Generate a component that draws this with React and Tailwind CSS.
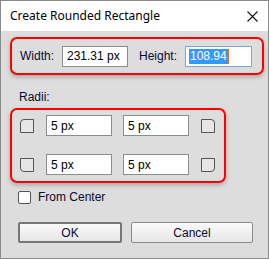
export default function App() {
  const font = { fontFamily: '"Liberation Sans", Arial, sans-serif' };

  const Corner = ({ corner }) => (
    <div
      className={`w-[14px] h-[14px] border border-[#555] bg-[#e6e6e6] ${corner}`}
    />
  );

  const Field = ({ value }) => (
    <div className="w-[66px] h-[21px] bg-white border border-[#8c8c8c] flex items-center pl-[4px] text-[12px] text-black">
      {value}
    </div>
  );

  return (
    <div
      className="w-[269px] h-[259px] border border-[#8a8a8a] bg-[#dddddd] flex flex-col select-none"
      style={font}
    >
      <div className="h-[30px] bg-white flex items-center justify-between pl-[9px] pr-[10px]">
        <span
          className="text-[12px] text-black"
          style={{ fontFamily: '"Noto Sans", "Open Sans", sans-serif' }}
        >
          Create Rounded Rectangle
        </span>
        <svg width="11" height="11" viewBox="0 0 11 11">
          <path d="M0.5 0.5 L10.5 10.5 M10.5 0.5 L0.5 10.5" stroke="#111" strokeWidth="1.1" />
        </svg>
      </div>

      <div className="flex flex-col pl-[9px]">
        <div className="mt-[6px] w-[254px] h-[38px] border-2 border-[#ff0000] rounded-[7px] flex items-center pl-[8px] shadow-[0_2px_4px_rgba(0,0,0,0.25)]">
          <span className="text-[12px] text-[#0a0a30] w-[42px]">Width:</span>
          <Field value="231.31 px" />
          <span className="text-[12px] text-[#0a0a30] ml-[11px] w-[46px]">Height:</span>
          <div className="w-[67px] h-[21px] bg-white border border-[#7aa7d6] flex items-center pl-[3px] text-[12px]">
            <span className="bg-[#3399ff] text-white px-[1px] leading-[15px]">108.94</span>
            <span className="w-[1px] h-[15px] bg-[#e07020]" />
          </div>
        </div>

        <span className="mt-[15px] ml-[9px] text-[12px] text-[#0a0a30] leading-[14px]">Radii:</span>

        <div className="mt-[4px] w-[216px] h-[75px] border-2 border-[#ff0000] rounded-[7px] flex flex-col gap-[18px] pt-[5px] pl-[8px] shadow-[0_2px_4px_rgba(0,0,0,0.25)]">
          <div className="flex items-center">
            <Corner corner="rounded-tl-[4px]" />
            <div className="ml-[12px]"><Field value="5 px" /></div>
            <div className="ml-[11px]"><Field value="5 px" /></div>
            <div className="ml-[12px]"><Corner corner="rounded-tr-[4px]" /></div>
          </div>
          <div className="flex items-center">
            <Corner corner="rounded-bl-[4px]" />
            <div className="ml-[12px]"><Field value="5 px" /></div>
            <div className="ml-[11px]"><Field value="5 px" /></div>
            <div className="ml-[12px]"><Corner corner="rounded-br-[4px]" /></div>
          </div>
        </div>

        <div className="mt-[5px] ml-[8px] flex items-center">
          <div className="w-[13px] h-[13px] border border-[#555] bg-white rounded-[2px]" />
          <span className="ml-[7px] text-[12px] text-[#0a0a30]">From Center</span>
        </div>

        <div className="mt-[16px] ml-[8px] flex items-center gap-[9px]">
          <button className="w-[104px] h-[21px] border-2 border-[#777] rounded-[2px] bg-gradient-to-b from-[#fafafa] to-[#e6e6e6] text-[12px] text-[#0a0a30] flex items-center justify-center">
            OK
          </button>
          <button className="w-[122px] h-[21px] border border-[#8a8a8a] rounded-[2px] bg-gradient-to-b from-[#fafafa] to-[#e6e6e6] text-[12px] text-[#0a0a30] flex items-center justify-center">
            Cancel
          </button>
        </div>
      </div>
    </div>
  );
}
